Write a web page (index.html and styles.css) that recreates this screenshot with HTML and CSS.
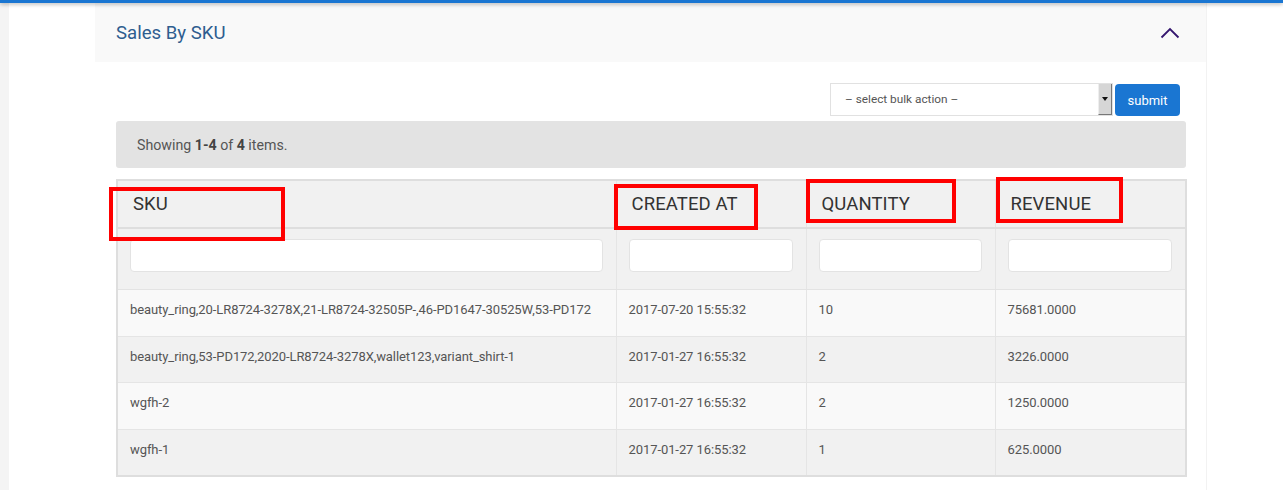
FILE: index.html
```html
<!DOCTYPE html>
<html>
<head>
<meta charset="utf-8">
<link rel="stylesheet" href="styles.css">
</head>
<body>
<div class="topbar"></div>
<div class="page">
  <div class="edge"></div>
  <div class="gutter"></div>
  <div class="panel">
    <div class="panel-head">
      <h3 class="panel-title">Sales By SKU</h3>
      <svg class="chevron" width="20" height="12" viewBox="0 0 20 12"><polyline points="1.5,10.5 10,2 18.5,10.5" fill="none" stroke="#35176f" stroke-width="1.8"/></svg>
    </div>
    <div class="panel-body">
      <div class="toolbar">
        <div class="select">
          <span class="select-text">– select bulk action –</span>
          <span class="select-btn"><span class="tri"></span></span>
        </div>
        <button class="submit">submit</button>
      </div>
      <div class="summary">Showing <b>1-4</b> of <b>4</b> items.</div>
      <div class="table-wrap">
        <table class="grid">
          <colgroup>
            <col class="c1"><col class="c2"><col class="c3"><col class="c4">
          </colgroup>
          <thead>
            <tr class="head-row">
              <th>SKU</th><th>CREATED AT</th><th>QUANTITY</th><th>REVENUE</th>
            </tr>
            <tr class="filter-row">
              <td><div class="finput"></div></td>
              <td><div class="finput"></div></td>
              <td><div class="finput"></div></td>
              <td><div class="finput"></div></td>
            </tr>
          </thead>
          <tbody>
            <tr class="odd"><td>beauty_ring,20-LR8724-3278X,21-LR8724-32505P-,46-PD1647-30525W,53-PD172</td><td>2017-07-20 15:55:32</td><td>10</td><td>75681.0000</td></tr>
            <tr class="even"><td>beauty_ring,53-PD172,2020-LR8724-3278X,wallet123,variant_shirt-1</td><td>2017-01-27 16:55:32</td><td>2</td><td>3226.0000</td></tr>
            <tr class="odd"><td>wgfh-2</td><td>2017-01-27 16:55:32</td><td>2</td><td>1250.0000</td></tr>
            <tr class="even"><td>wgfh-1</td><td>2017-01-27 16:55:32</td><td>1</td><td>625.0000</td></tr>
          </tbody>
        </table>
        <div class="mark mark-sku"></div>
        <div class="mark mark-created"></div>
        <div class="mark mark-qty"></div>
        <div class="mark mark-rev"></div>
      </div>
    </div>
  </div>
</div>
</body>
</html>
```

FILE: styles.css
```css
html, body {
  margin: 0;
  padding: 0;
  background: #ffffff;
  font-family: Roboto, "Liberation Sans", Arial, sans-serif;
}
.topbar {
  height: 3px;
  background: #1a76d2;
  box-shadow: 0 1px 4px rgba(0,0,0,0.35);
  position: relative;
  z-index: 2;
}
.page {
  display: flex;
  height: 487px;
}
.edge {
  width: 9px;
  background: #f4f4f4;
}
.gutter {
  width: 86px;
}
.panel {
  width: 1111px;
  border-right: 1px solid #f2f2f2;
}
.panel-head {
  height: 59px;
  background: #f9f9f9;
  display: flex;
  align-items: center;
  justify-content: space-between;
  padding: 0 26px 0 21px;
}
.panel-title {
  margin: 0;
  font-weight: 400;
  font-size: 18.6px;
  color: #2e5d8f;
}
.chevron {
  display: block;
  margin-top: 1px;
}
.panel-body {
  padding: 21px 20px 0 21px;
}
.toolbar {
  display: flex;
  justify-content: flex-end;
  align-items: flex-start;
  padding-right: 6px;
  gap: 2px;
}
.select {
  width: 283px;
  height: 33px;
  box-sizing: border-box;
  border: 1px solid #e1e1e1;
  display: flex;
  align-items: stretch;
  background: #fff;
}
.select-text {
  flex: 1;
  font-size: 11.8px;
  color: #555;
  padding-left: 14px;
  line-height: 31px;
}
.select-btn {
  width: 12px;
  background: #d6d6d6;
  border-right: 1px solid #777;
  border-bottom: 1px solid #777;
  border-left: 1px solid #eee;
  display: flex;
  align-items: center;
  justify-content: center;
}
.tri {
  width: 0;
  height: 0;
  border-left: 3px solid transparent;
  border-right: 3px solid transparent;
  border-top: 4px solid #111;
}
.submit {
  width: 65px;
  height: 32px;
  margin-top: 1px;
  border: none;
  border-radius: 4px;
  background: #1a76d2;
  color: #fff;
  font-family: Roboto, "Liberation Sans", Arial, sans-serif;
  font-size: 13px;
  padding: 0;
}
.summary {
  margin-top: 5px;
  height: 47px;
  box-sizing: border-box;
  background: #e3e3e3;
  border-radius: 3px;
  padding: 1px 0 0 21px;
  line-height: 46px;
  font-size: 14.2px;
  color: #555;
}
.summary b {
  font-weight: 700;
  color: #444;
}
.table-wrap {
  position: relative;
  margin-top: 11px;
  width: 1071px;
}
.grid {
  width: 100%;
  border-collapse: collapse;
  table-layout: fixed;
  border: 2px solid #dedede;
}
.c1 { width: 499px; }
.c2 { width: 190px; }
.c3 { width: 189px; }
.c4 { width: auto; }
.head-row th {
  height: 46px;
  padding: 0 0 0 15px;
  text-align: left;
  font-weight: 400;
  font-size: 18.5px;
  color: #333;
  background: #f1f1f1;
  border-left: 1px solid #e5e5e5;
  border-bottom: 2px solid #dedede;
  letter-spacing: 0.1px;
}
.filter-row td {
  background: #f1f1f1;
  padding: 10px 13px 17px 12px;
  border-left: 1px solid #e5e5e5;
  border-bottom: 1px solid #e3e3e3;
}
.finput {
  height: 33px;
  box-sizing: border-box;
  background: #fff;
  border: 1px solid #e3e3e3;
  border-radius: 4px;
}
tbody td {
  height: 39.6px;
  padding: 0 0 6px 12px;
  font-size: 13px;
  letter-spacing: -0.08px;
  color: #555;
  border-left: 1px solid #e5e5e5;
  border-top: 1px solid #e5e5e5;
  white-space: nowrap;
}
tr.odd td { background: #f9f9f9; }
tr.even td { background: #f1f1f1; }
.mark {
  position: absolute;
  border: 4px solid #ff0000;
  box-sizing: border-box;
}
.mark-sku { left: -7px; top: 8px; width: 176px; height: 54px; }
.mark-created { left: 498px; top: 5px; width: 144px; height: 46px; }
.mark-qty { left: 690px; top: 0px; width: 150px; height: 44px; }
.mark-rev { left: 880px; top: -2px; width: 127px; height: 46px; }
```
